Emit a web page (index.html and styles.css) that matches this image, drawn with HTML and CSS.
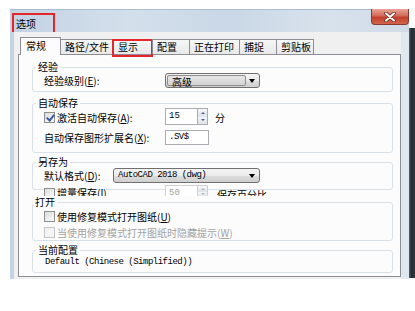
FILE: index.html
```html
<!DOCTYPE html>
<html lang="zh-CN">
<head>
    <meta charset="utf-8" />
    <title>选项</title>
    <link rel="stylesheet" href="styles.css">
</head>
<body>
    <div class="screen">
        <div class="window">
            <div class="titlebar">
                <span class="title">选项</span>
                <span class="close">
                    <svg width="14" height="10" viewBox="0 0 14 10">
                        <path d="M3 1.5 L11 8.5 M11 1.5 L3 8.5" stroke="#6b2a22" stroke-width="3.6" stroke-linecap="round"/>
                        <path d="M3 1.5 L11 8.5 M11 1.5 L3 8.5" stroke="#ffffff" stroke-width="2" stroke-linecap="round"/>
                    </svg>
                </span>
            </div>
            <div class="client">
                <div class="tabs">
                    <span class="tab active">常规</span>
                    <span class="tab wide">路径/文件</span>
                    <span class="tab marked">显示</span>
                    <span class="tab">配置</span>
                    <span class="tab wide2">正在打印</span>
                    <span class="tab">捕捉</span>
                    <span class="tab">剪贴板</span>
                </div>
                <div class="panel">
                    <fieldset class="group g-exp">
                        <legend>经验</legend>
                        <div class="row">
                            <span class="lbl">经验级别(<u>E</u>):</span>
                            <span class="combo short"><span class="combo-inner">高级</span><i class="arrow"></i></span>
                        </div>
                    </fieldset>

                    <fieldset class="group g-auto">
                        <legend>自动保存</legend>
                        <div class="row tall">
                            <span class="lbl"><i class="check on"></i>激活自动保存(<u>A</u>):</span>
                            <span class="spin">
                                <span class="spin-text">15</span>
                                <span class="spin-btns"><i class="up"></i><i class="down"></i></span>
                            </span>
                            <span class="unit">分</span>
                        </div>
                        <div class="row second">
                            <span class="lbl">自动保存图形扩展名(<u>X</u>):</span>
                            <span class="field">.SV$</span>
                        </div>
                    </fieldset>

                    <fieldset class="group g-save">
                        <legend>另存为</legend>
                        <div class="row">
                            <span class="lbl narrow">默认格式(<u>D</u>):</span>
                            <span class="combo long">AutoCAD 2018 (dwg)<i class="arrow"></i></span>
                        </div>
                        <div class="row clip">
                            <span class="lbl"><i class="check"></i>增量保存(<u>I</u>)</span>
                            <span class="spin off">
                                <span class="spin-text">50</span>
                                <span class="spin-btns"><i class="up"></i><i class="down"></i></span>
                            </span>
                            <span class="unit low">保存百分比</span>
                        </div>
                    </fieldset>

                    <fieldset class="group g-open">
                        <legend>打开</legend>
                        <div class="row">
                            <span class="lbl wide"><i class="check"></i>使用修复模式打开图纸(<u>U</u>)</span>
                        </div>
                        <div class="row second-open disabled">
                            <span class="lbl wide"><i class="check"></i>当使用修复模式打开图纸时隐藏提示(<u>W</u>)</span>
                        </div>
                    </fieldset>

                    <fieldset class="group g-prof">
                        <legend>当前配置</legend>
                        <div class="row mono-row">
                            <span class="mono">Default (Chinese (Simplified))</span>
                        </div>
                    </fieldset>
                </div>
            </div>
        </div>
        <div class="edge"></div>
    </div>
</body>
</html>
```

FILE: styles.css
```css
body {
    margin: 0;
    background-color: #ffffff;
    font-family: "Noto Sans CJK SC", "Noto Sans", sans-serif;
    font-size: 10px;
    color: #000;
}
.screen {
    display: flex;
    padding: 9px 0 0 10px;
}
.window {
    width: 399px;
    display: flex;
    flex-direction: column;
}
.titlebar {
    height: 23px;
    display: flex;
    align-items: flex-start;
    padding-top: 3px;
    box-sizing: border-box;
    background: linear-gradient(90deg, #c3d3e4, #d3dfeb 30%, #c9d7e6 55%, #d8e2ec 80%, #cfdbe8);
    border-top: 1px solid #a9bcd0;
}
.title {
    display: inline-block;
    box-sizing: border-box;
    width: 43px;
    height: 21px;
    margin-left: 2px;
    padding-left: 2px;
    line-height: 17px;
    border: 2px solid #e5262b;
}
.close {
    margin-left: auto;
    margin-top: -4px;
    width: 38px;
    height: 16px;
    box-sizing: border-box;
    display: flex;
    align-items: center;
    justify-content: center;
    border: 1px solid #8b3a31;
    border-top: none;
    border-radius: 0 0 4px 4px;
    background: linear-gradient(#e8a597, #d26b58 45%, #c2402d 55%, #d2664e);
}
.client {
    background-color: #f0f0f0;
    border-left: 4px solid #c3d4e5;
    border-right: 8px solid #dfe8f1;
    padding: 5px 0 2px 4px;
}
.tabs {
    display: flex;
    align-items: flex-end;
    height: 17px;
    margin-left: 2px;
}
.tab {
    position: relative;
    width: 38px;
    height: 15px;
    box-sizing: border-box;
    padding-left: 4px;
    line-height: 14px;
    border: 1px solid #8c8e94;
    border-bottom: none;
    margin-left: -1px;
    background: linear-gradient(#f7f7f7, #e8e8e8);
    white-space: nowrap;
}
.tab.active {
    width: 41px;
    height: 18px;
    margin-left: 0;
    margin-bottom: -1px;
    padding-left: 5px;
    line-height: 16px;
    background: #fcfcfc;
    z-index: 1;
}
.tab.wide {
    width: 53px;
}
.tab.wide2 {
    width: 51px;
}
.tab.marked {
    width: 41px;
    padding-left: 5px;
}
.tab.marked::after {
    content: "";
    position: absolute;
    left: -1px;
    top: -1px;
    right: -1px;
    bottom: -3px;
    border: 2px solid #e5262b;
}
.panel {
    width: 383px;
    box-sizing: border-box;
    border: 1px solid #8c8e94;
    background-color: #fcfcfc;
    padding: 6px 7px 3px 13px;
}
.group {
    margin: 0;
    min-width: 0;
    border: 1px solid #d8e1e7;
    border-radius: 3px;
    padding: 0 8px 0 3px;
}
.group legend {
    padding: 0 2px;
    line-height: 12px;
}
.g-exp {
    padding-bottom: 3px;
    margin-bottom: 5px;
}
.g-auto {
    padding-bottom: 7px;
    margin-bottom: 3px;
}
.g-save {
    margin-bottom: 6px;
}
.g-open {
    padding-bottom: 1px;
    margin-bottom: 3px;
}
.g-open legend {
    margin-left: -3px;
}
.g-prof {
    padding-bottom: 3px;
}
.row {
    display: flex;
    align-items: center;
    height: 15px;
    margin-left: 8px;
    line-height: 15px;
    white-space: nowrap;
}
.row.tall {
    height: 16px;
}
.row.second {
    margin-top: 5px;
}
.row.clip {
    height: 11px;
    margin-top: 2px;
    margin-bottom: -7px;
    overflow: hidden;
    align-items: flex-start;
}
.g-open .row {
    height: 14px;
    margin-top: 1px;
}
.g-open .row.second-open {
    margin-top: 2px;
}
.row.mono-row {
    height: 13px;
}
.disabled {
    color: #a3a3a3;
}
.lbl {
    display: flex;
    align-items: center;
    width: 121px;
    flex-shrink: 0;
}
.lbl.narrow {
    width: 69px;
}
.lbl.wide {
    width: auto;
}
.check {
    display: inline-block;
    width: 11px;
    height: 11px;
    box-sizing: border-box;
    margin-right: 2px;
    border: 1px solid #8e8f8f;
    background: linear-gradient(135deg, #dcdcdc, #fbfbfb);
    position: relative;
}
.disabled .check {
    border-color: #c4c4c4;
    background: #f4f4f4;
}
.check.on::after {
    content: "";
    position: absolute;
    left: 3px;
    top: 0;
    width: 3px;
    height: 6px;
    border: solid #3a5aa5;
    border-width: 0 2px 2px 0;
    transform: rotate(40deg);
}
.clip .check {
    margin-top: 2px;
}
.combo {
    position: relative;
    display: flex;
    align-items: center;
    height: 15px;
    box-sizing: border-box;
    border: 1px solid #707070;
    border-radius: 3px;
    background: linear-gradient(#f3f3f3 0, #ebebeb 50%, #dddddd 51%, #cfcfcf);
    line-height: 13px;
}
.combo.short {
    width: 95px;
}
.combo.long {
    width: 147px;
    padding-left: 4px;
    font-family: "Liberation Mono", monospace;
    font-size: 9px;
    letter-spacing: -0.5px;
}
.combo-inner {
    width: 79px;
    height: 11px;
    margin-left: 1px;
    padding-left: 4px;
    box-sizing: border-box;
    line-height: 11px;
    border: 1px solid #8d8d8d;
    border-radius: 2px;
    background: linear-gradient(#e6e6e6, #d4d4d4);
}
.arrow {
    margin-left: auto;
    margin-right: 4px;
    width: 0;
    height: 0;
    border-left: 3px solid transparent;
    border-right: 3px solid transparent;
    border-top: 4px solid #000;
}
.spin {
    display: flex;
    height: 17px;
    margin-top: -1px;
}
.clip .spin {
    height: 13px;
    margin-top: 0;
}
.spin-text {
    width: 32px;
    box-sizing: border-box;
    padding-left: 3px;
    border: 1px solid #abadb3;
    border-right: none;
    background: #fff;
    font-family: "Liberation Mono", monospace;
    font-size: 9px;
    line-height: 15px;
}
.spin.off .spin-text {
    color: #a0a0a0;
    border-color: #d0d0d0;
}
.spin-btns {
    width: 11px;
    display: flex;
    flex-direction: column;
    border: 1px solid #abadb3;
    box-sizing: border-box;
}
.spin.off .spin-btns {
    border-color: #d0d0d0;
}
.spin-btns i {
    flex: 1;
    display: flex;
    align-items: center;
    justify-content: center;
    background: linear-gradient(#f4f6f9, #dde3ea);
}
.spin-btns i::after {
    content: "";
    border-left: 2px solid transparent;
    border-right: 2px solid transparent;
}
.spin-btns .up::after {
    border-bottom: 2px solid #4d6185;
}
.spin-btns .down::after {
    border-top: 2px solid #4d6185;
}
.spin.off .spin-btns i::after {
    border-top-color: #b8b8b8;
    border-bottom-color: #b8b8b8;
}
.spin.off .spin-btns .up::after {
    border-top-color: transparent;
}
.spin.off .spin-btns .down::after {
    border-bottom-color: transparent;
}
.unit {
    margin-left: 7px;
}
.unit.low {
    margin-left: 9px;
    margin-top: 2px;
}
.field {
    width: 44px;
    height: 15px;
    box-sizing: border-box;
    padding-left: 3px;
    border: 1px solid #abadb3;
    background: #fff;
    font-family: "Liberation Mono", monospace;
    font-size: 9px;
    letter-spacing: -0.5px;
    line-height: 13px;
}
.mono {
    font-family: "Liberation Mono", monospace;
    font-size: 9px;
    letter-spacing: -0.5px;
    margin-left: 1px;
}
.edge {
    width: 6px;
    height: 250px;
    margin-top: 19px;
    background: linear-gradient(90deg, #5a6168, #252b31 40%, #30373d);
}
```
